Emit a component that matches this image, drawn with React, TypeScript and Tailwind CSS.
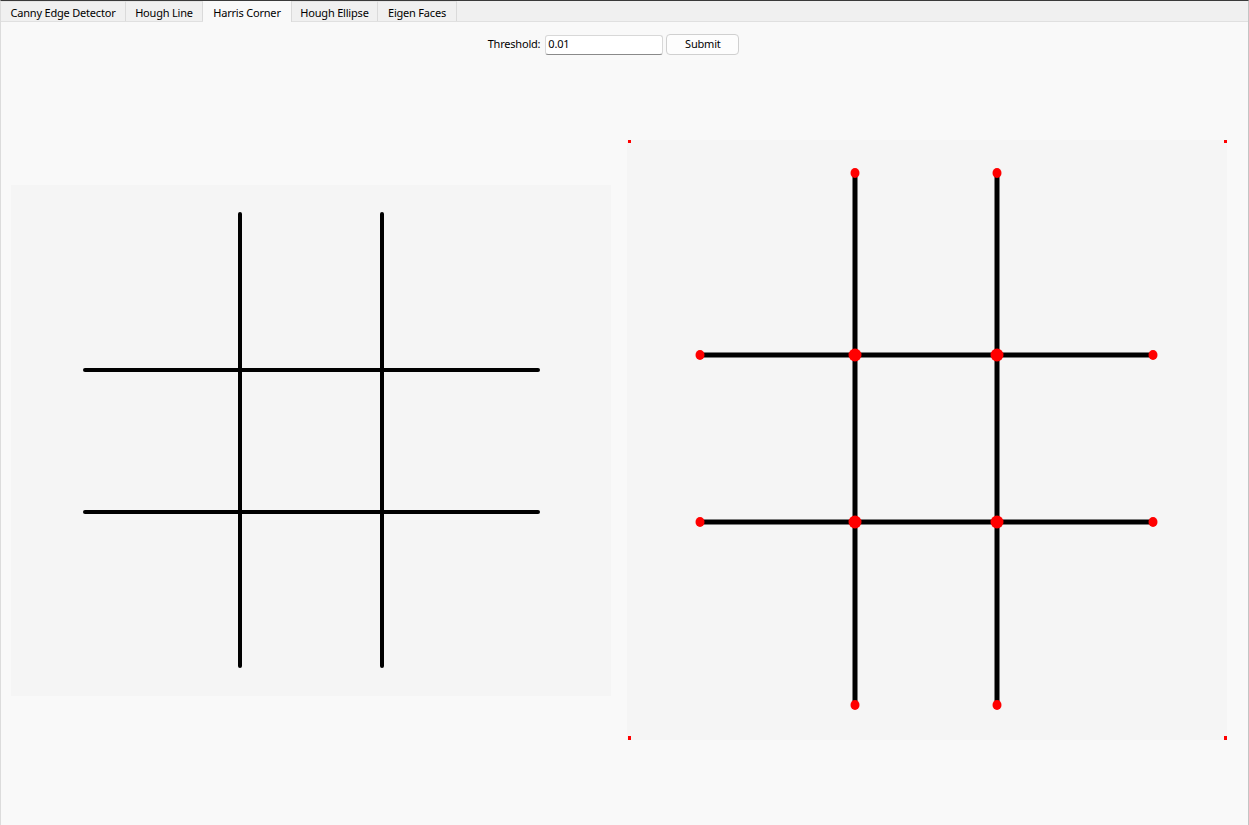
const tabs = [
  { label: 'Canny Edge Detector', w: 'w-[125px]' },
  { label: 'Hough Line', w: 'w-[77px]' },
  { label: 'Harris Corner', w: 'w-[89px]', active: true },
  { label: 'Hough Ellipse', w: 'w-[86px]' },
  { label: 'Eigen Faces', w: 'w-[79px]' },
];

function InputImage() {
  return (
    <svg width="600" height="511" className="block bg-[#f5f5f5]">
      <g stroke="#000" strokeWidth="4" strokeLinecap="round">
        <line x1="229" y1="29" x2="229" y2="481" />
        <line x1="371" y1="29" x2="371" y2="481" />
        <line x1="74" y1="185" x2="527" y2="185" />
        <line x1="74" y1="327" x2="527" y2="327" />
      </g>
    </svg>
  );
}

function CornerImage() {
  const xs = [228, 370];
  const ys = [215, 382];
  const ends: [number, number][] = [
    [228, 33], [370, 33], [228, 565], [370, 565],
    [73, 215], [526, 215], [73, 382], [526, 382],
  ];
  return (
    <svg width="600" height="600" className="block bg-[#f5f5f5]">
      <g stroke="#000" strokeWidth="5">
        {xs.map((x) => (
          <line key={x} x1={x} y1="33" x2={x} y2="565" />
        ))}
        {ys.map((y) => (
          <line key={y} x1="73" y1={y} x2="526" y2={y} />
        ))}
      </g>
      <g fill="#ff0000">
        {ends.map(([x, y]) => (
          <ellipse key={`${x}-${y}`} cx={x} cy={y} rx="4.5" ry="5" />
        ))}
        {xs.map((x) =>
          ys.map((y) => <circle key={`${x}:${y}`} cx={x} cy={y} r="6.5" />),
        )}
        <rect x="1" y="0" width="3" height="3" />
        <rect x="597" y="0" width="3" height="3" />
        <rect x="1" y="596" width="3" height="4" />
        <rect x="597" y="596" width="3" height="4" />
      </g>
    </svg>
  );
}

export default function App() {
  return (
    <div
      className="flex h-[825px] w-[1249px] flex-col border-t border-r border-l border-t-[#3a3a3a] border-r-[#c4c4c4] border-l-[#dcdcdc] bg-[#f9f9f9] text-[11px] tracking-[-0.2px] text-black"
      style={{ fontFamily: '"Noto Sans", "Open Sans", sans-serif' }}
    >
      <div className="flex h-[21px] items-end border-b border-[#e0e0e0] bg-[#f0f0f0]">
        {tabs.map((t) => (
          <div
            key={t.label}
            className={`flex items-center justify-center border-r border-[#dadada] pt-[2px] leading-none ${t.w} ${
              t.active ? 'h-[21px] -mb-px bg-[#f9f9f9]' : 'h-[20px] border-t border-t-[#e4e4e4] bg-[#f0f0f0]'
            }`}
          >
            {t.label}
          </div>
        ))}
      </div>

      <div className="flex items-center justify-center gap-[3px] pt-[12px] pr-[22px]">
        <span className="mr-[2px]">Threshold:</span>
        <div className="flex h-[20px] w-[118px] items-center rounded-[3px] border border-[#d8d8d8] border-b-[#8a8a8a] bg-white px-[2px]">
          0.01
        </div>
        <button className="h-[21px] w-[73px] rounded-[4px] border border-[#d0d0d0] bg-[#fdfdfd]">
          Submit
        </button>
      </div>

      <div className="flex flex-1 items-center gap-[16px] pl-[10px]">
        <InputImage />
        <CornerImage />
      </div>
    </div>
  );
}
